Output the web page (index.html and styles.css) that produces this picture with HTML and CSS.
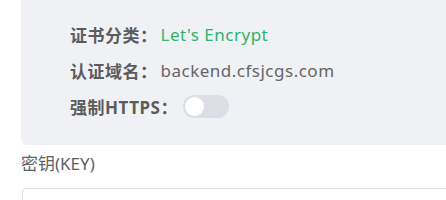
FILE: index.html
```html
<!DOCTYPE html>
<html lang="zh-CN">
<head>
    <meta charset="UTF-8">
    <meta name="viewport" content="width=device-width, initial-scale=1.0">
    <title>SSL</title>
    <link rel="stylesheet" href="styles.css">
</head>
<body>
    <div class="cert-panel">
        <div class="cert-row">
            <span class="cert-label">证书分类：</span>
            <span class="cert-value green">Let's Encrypt</span>
        </div>
        <div class="cert-row">
            <span class="cert-label">认证域名：</span>
            <span class="cert-value">backend.cfsjcgs.com</span>
        </div>
        <div class="cert-row">
            <span class="cert-label">强制HTTPS：</span>
            <span class="switch"><span class="switch-knob"></span></span>
        </div>
    </div>

    <div class="form-item">
        <div class="form-label">密钥(KEY)</div>
        <div class="form-input"></div>
    </div>
</body>
</html>
```

FILE: styles.css
```css
* {
    margin: 0;
    padding: 0;
    box-sizing: border-box;
}

body {
    font-family: "Noto Sans", "Noto Sans CJK SC", sans-serif;
    font-size: 17px;
    letter-spacing: 0.5px;
    background-color: #fff;
    padding-left: 21px;
    overflow: hidden;
}

.cert-panel {
    background-color: #f0f1f5;
    border-radius: 0 0 6px 6px;
    margin-right: -10px;
    padding: 20px 0 0 49px;
    height: 145px;
    display: flex;
    flex-direction: column;
    gap: 8px;
}

.cert-row {
    display: flex;
    align-items: center;
    height: 28px;
    color: #666;
}

.cert-label {
    font-weight: bold;
    color: #5c5c5c;
    margin-right: 3px;
}

.cert-value {
    color: #666;
}

.cert-value.green {
    color: #2fb36b;
}

.switch {
    width: 46px;
    height: 23px;
    border-radius: 12px;
    background-color: #dcdee6;
    padding: 2px;
    display: flex;
    margin-left: 2px;
}

.switch-knob {
    width: 19px;
    height: 19px;
    border-radius: 50%;
    background-color: #fff;
}

.form-item {
    padding-top: 8px;
}

.form-label {
    color: #606266;
    font-size: 17px;
    letter-spacing: 0;
    line-height: 22px;
    margin-bottom: 13px;
}

.form-input {
    height: 32px;
    margin-left: 1px;
    margin-right: -10px;
    border: 1px solid #dcdfe6;
    border-radius: 4px;
}
```
